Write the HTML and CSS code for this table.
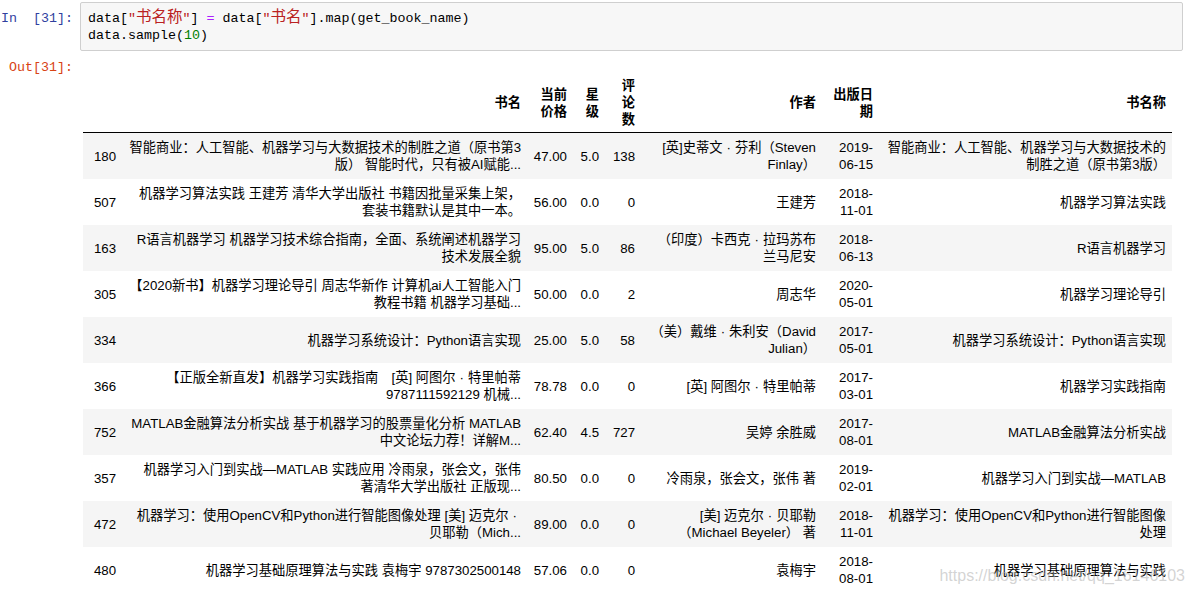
FILE: index.html
```html
<!DOCTYPE html>
<html lang="zh-CN">
<head>
<meta charset="utf-8">
<title>Notebook</title>
<link rel="stylesheet" href="styles.css">
</head>
<body>
<div class="cell input-cell">
  <div class="prompt in-prompt">In  [31]:</div>
  <div class="input-box"><span>data[</span><span class="s">"<span class="zh">书名称</span>"</span><span>] </span><span class="o">=</span><span> data[</span><span class="s">"<span class="zh">书名</span>"</span><span>].map(get_book_name)</span>
<span>data.sample(</span><span class="n">10</span><span>)</span></div>
</div>
<div class="cell output-cell">
  <div class="prompt out-prompt">Out[31]:</div>
  <div class="output-area">
    <table class="df">
      <colgroup>
        <col class="c-idx"><col class="c-name"><col class="c-price"><col class="c-star"><col class="c-cmt"><col class="c-author"><col class="c-date"><col class="c-title">
      </colgroup>
      <thead>
        <tr><th></th><th>书名</th><th>当前价格</th><th>星级</th><th>评论数</th><th>作者</th><th>出版日期</th><th>书名称</th></tr>
      </thead>
      <tbody>
        <tr><th>180</th><td class="nw">智能商业：人工智能、机器学习与大数据技术的制胜之道（原书第3<br>版） 智能时代，只有被AI赋能...</td><td>47.00</td><td>5.0</td><td>138</td><td class="nw">[英]史蒂文<span class="dot">·</span>芬利（Steven<br>Finlay）</td><td>2019-06-15</td><td class="nw">智能商业：人工智能、机器学习与大数据技术的<br>制胜之道（原书第3版）</td></tr>
        <tr><th>507</th><td class="nw">机器学习算法实践 王建芳 清华大学出版社 书籍因批量采集上架，<br>套装书籍默认是其中一本。</td><td>56.00</td><td>0.0</td><td>0</td><td class="nw">王建芳</td><td>2018-11-01</td><td class="nw">机器学习算法实践</td></tr>
        <tr><th>163</th><td class="nw">R语言机器学习 机器学习技术综合指南，全面、系统阐述机器学习<br>技术发展全貌</td><td>95.00</td><td>5.0</td><td>86</td><td class="nw">（印度）卡西克<span class="dot">·</span>拉玛苏布<br>兰马尼安</td><td>2018-06-13</td><td class="nw">R语言机器学习</td></tr>
        <tr><th>305</th><td class="nw">【2020新书】机器学习理论导引 周志华新作 计算机ai人工智能入门<br>教程书籍 机器学习基础...</td><td>50.00</td><td>0.0</td><td>2</td><td class="nw">周志华</td><td>2020-05-01</td><td class="nw">机器学习理论导引</td></tr>
        <tr><th>334</th><td class="nw">机器学习系统设计：Python语言实现</td><td>25.00</td><td>5.0</td><td>58</td><td class="nw">（美）戴维<span class="dot">·</span>朱利安（David<br>Julian）</td><td>2017-05-01</td><td class="nw">机器学习系统设计：Python语言实现</td></tr>
        <tr><th>366</th><td class="nw">【正版全新直发】机器学习实践指南　[英] 阿图尔<span class="dot">·</span>特里帕蒂<br>9787111592129 机械...</td><td>78.78</td><td>0.0</td><td>0</td><td class="nw">[英] 阿图尔<span class="dot">·</span>特里帕蒂</td><td>2017-03-01</td><td class="nw">机器学习实践指南</td></tr>
        <tr><th>752</th><td class="nw">MATLAB金融算法分析实战 基于机器学习的股票量化分析 MATLAB<br>中文论坛力荐！详解M...</td><td>62.40</td><td>4.5</td><td>727</td><td class="nw">吴婷 余胜威</td><td>2017-08-01</td><td class="nw">MATLAB金融算法分析实战</td></tr>
        <tr><th>357</th><td class="nw">机器学习入门到实战—MATLAB 实践应用 冷雨泉，张会文，张伟<br>著清华大学出版社 正版现...</td><td>80.50</td><td>0.0</td><td>0</td><td class="nw">冷雨泉，张会文，张伟 著</td><td>2019-02-01</td><td class="nw">机器学习入门到实战—MATLAB</td></tr>
        <tr><th>472</th><td class="nw">机器学习：使用OpenCV和Python进行智能图像处理 [美] 迈克尔<span class="dot">·</span><br>贝耶勒（Mich...</td><td>89.00</td><td>0.0</td><td>0</td><td class="nw">[美] 迈克尔<span class="dot">·</span>贝耶勒<br>（Michael Beyeler） 著</td><td>2018-11-01</td><td class="nw">机器学习：使用OpenCV和Python进行智能图像<br>处理</td></tr>
        <tr><th>480</th><td class="nw">机器学习基础原理算法与实践 袁梅宇 9787302500148</td><td>57.06</td><td>0.0</td><td>0</td><td class="nw">袁梅宇</td><td>2018-08-01</td><td class="nw">机器学习基础原理算法与实践</td></tr>
      </tbody>
    </table>
  </div>
</div>
<div class="watermark">https://blog.csdn.net/qq_16146103</div>
</body>
</html>
```

FILE: styles.css
```css
html, body {
  margin: 0;
  padding: 0;
  background: #ffffff;
}

body {
  position: relative;
  font-family: "Liberation Sans", "Noto Sans CJK SC", sans-serif;
  color: #000000;
  overflow: hidden;
}

.cell {
  display: flex;
  align-items: flex-start;
}

.input-cell {
  margin-top: 2px;
}

.output-cell {
  margin-top: 2px;
}

.prompt {
  flex: none;
  width: 80px;
  box-sizing: border-box;
  padding-right: 7px;
  text-align: right;
  font-family: "Liberation Mono", "Noto Sans CJK SC", monospace;
  font-size: 13.33px;
  line-height: 17px;
  white-space: pre;
}

.in-prompt {
  color: #303f9f;
  padding-top: 8px;
}

.out-prompt {
  color: #d84315;
  padding-top: 6px;
}

.input-box {
  flex: 1;
  margin-right: 11px;
  background: #f7f7f7;
  border: 1px solid #cfcfcf;
  border-radius: 2px;
  padding: 7px 7px 6px 7px;
  font-family: "Liberation Mono", "Noto Sans CJK SC", monospace;
  font-size: 13.33px;
  line-height: 17px;
  white-space: pre;
  color: #000000;
}

.input-box .zh {
  font-size: 15.5px;
  line-height: 17px;
}

.input-box .s {
  color: #ba2121;
}

.input-box .o {
  color: #aa22ff;
}

.input-box .n {
  color: #008000;
}

.output-area {
  flex: 1;
  padding-top: 18px;
}

.df {
  margin-left: 3px;
  width: 1089px;
  table-layout: fixed;
  border-collapse: collapse;
  border-spacing: 0;
  font-size: 13.25px;
  line-height: 17px;
  color: #000000;
}

.c-idx { width: 39px; }
.c-name { width: 405px; }
.c-price { width: 46px; }
.c-star { width: 32px; }
.c-cmt { width: 36px; }
.c-author { width: 181px; }
.c-date { width: 57px; }
.c-title { width: 293px; }

.df th,
.df td {
  padding: 6px;
  text-align: right;
  vertical-align: middle;
  border: none;
}

.df thead th {
  font-weight: bold;
  padding-bottom: 4px;
  border-bottom: 1px solid #000000;
}

.df tbody th {
  font-weight: normal;
}

.df tbody tr:nth-child(odd) {
  background: #f5f5f5;
}

.df td.nw {
  white-space: nowrap;
}

.df .dot {
  margin: 0 4px;
}

.watermark {
  position: absolute;
  top: 565px;
  right: 9px;
  font-family: "Liberation Sans", sans-serif;
  font-size: 16px;
  line-height: 21px;
  color: rgba(175, 175, 175, 0.55);
  white-space: nowrap;
  pointer-events: none;
}
```
